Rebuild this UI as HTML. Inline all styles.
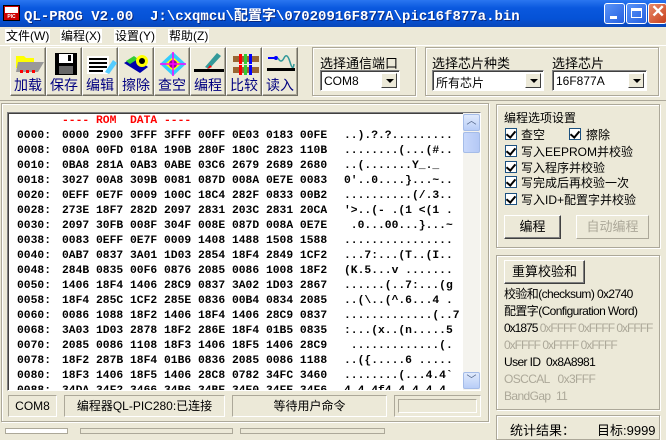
<!DOCTYPE html>
<html><head><meta charset="utf-8"><style>
*{margin:0;padding:0;box-sizing:border-box}
body{width:666px;height:433px;overflow:hidden;background:#ECE9D8;font-family:"Liberation Sans","Noto Sans CJK SC",sans-serif;font-size:12px;position:relative;color:#000}
.a{position:absolute}
.title{left:0;top:0;width:666px;height:27px;background:linear-gradient(#2a76f0,#0a58de 30%,#0552d6 70%,#0a47b8);}
.tt{left:24px;top:5px;color:#fff;font:bold 14px "Liberation Mono","Noto Sans CJK SC",monospace;white-space:pre;text-shadow:1px 1px 0 #0a2a80}
.wb{top:3px;width:21px;height:21px;border:1px solid #fff;border-radius:3px;background:linear-gradient(135deg,#5a94f8,#2560e0)}
.menu{top:29px;font-size:12px;background:#fff;padding:0 1px;line-height:14px}
.btn{top:47px;width:36px;height:49px;border:1px solid;border-color:#fff #716f64 #716f64 #fff;box-shadow:inset -1px -1px 0 #aca899}
.bl{position:absolute;left:0;width:34px;top:27px;text-align:center;color:#000080;font-size:14px}
.grp{border:1px solid #aca899;box-shadow:1px 1px 0 #fff inset,1px 1px 0 #fff}
.combo{background:#fff;border:1px solid;border-color:#808080 #fff #fff #808080;box-shadow:inset 1px 1px 0 #404040;height:21px;font-size:12px;padding:3px 0 0 3px}
.dd{position:absolute;right:2px;top:2px;width:16px;height:15px;background:#ECE9D8;border:1px solid;border-color:#fff #404040 #404040 #fff}
.dd:after{content:"";position:absolute;left:4px;top:5px;border:4px solid transparent;border-top:4px solid #000;border-bottom:0}
.mono{font:bold 11.33px/15px "Liberation Mono",monospace;white-space:pre}
.sb{top:395px;height:22px;border:1px solid;border-color:#aca899 #fff #fff #aca899;text-align:center;line-height:20px;font-size:12px}
.cb{width:12px;height:12px;border:1px solid #1c5180;background:#fff;display:inline-block;position:absolute}
.cb:after{content:"";position:absolute;left:2px;top:0px;width:4px;height:7px;border:solid #000;border-width:0 2px 2px 0;transform:rotate(40deg)}
.pb{border:1px solid;border-color:#fff #404040 #404040 #fff;box-shadow:inset -1px -1px 0 #808080;text-align:center;font-size:13px;line-height:21px}
.g{color:#aca899}
</style></head><body>
<div class="a title"></div>
<div class="a" style="left:3px;top:5px;width:17px;height:16px;background:#c00;border:1px solid #000"><div style="background:#fff;height:6px;margin:1px"></div><div style="font:bold 5px sans-serif;color:#fff;text-align:center">PIC</div></div>
<div class="a tt">QL-PROG V2.00  J:\cxqmcu\配置字\07020916F877A\pic16f877a.bin</div>
<div class="a wb" style="left:604px"><div style="position:absolute;left:5px;top:12px;width:7px;height:3px;background:#fff"></div></div>
<div class="a wb" style="left:626px"><div style="position:absolute;left:4px;top:4px;width:11px;height:10px;border:1px solid #fff;border-top-width:3px"></div></div>
<div class="a wb" style="left:648px;width:19px;background:linear-gradient(135deg,#e88a6a,#c8401c)"><div style="position:absolute;left:2px;top:-2px;color:#fff;font:bold 17px sans-serif">✕</div></div>

<div class="a menu" style="left:5px">文件(W)</div>
<div class="a menu" style="left:60px">编程(X)</div>
<div class="a menu" style="left:114px">设置(Y)</div>
<div class="a menu" style="left:168px">帮助(Z)</div>
<div class="a" style="left:0;top:45px;width:666px;height:1px;background:#fff"></div>

<div class="a btn" style="left:10px"><svg class="a" style="left:3px;top:6px" width="30" height="20"><path d="M2 2h8l2 2h8v10H2z" fill="#ff0"/><path d="M4 8h26l-6 10H2z" fill="#999"/><rect x="6" y="16" width="3" height="3" fill="#f00"/><rect x="12" y="16" width="3" height="3" fill="#f00"/><rect x="18" y="16" width="3" height="3" fill="#f00"/></svg><div class="bl">加载</div></div>
<div class="a btn" style="left:46px"><svg class="a" style="left:7px;top:4px" width="24" height="24"><rect x="1" y="1" width="22" height="22" fill="#000"/><rect x="5" y="2" width="14" height="9" fill="#fff"/><rect x="5" y="14" width="14" height="8" fill="#666"/><rect x="14" y="3" width="3" height="6" fill="#000"/></svg><div class="bl">保存</div></div>
<div class="a btn" style="left:82px"><svg class="a" style="left:4px;top:6px" width="30" height="22"><rect x="0" y="2" width="22" height="18" fill="#fff"/><g fill="#000"><rect x="2" y="4" width="18" height="2"/><rect x="2" y="8" width="18" height="2"/><rect x="2" y="12" width="18" height="2"/><rect x="2" y="16" width="14" height="2"/></g><path d="M18 18l8-12 4 3-8 11z" fill="#5cf"/></svg><div class="bl">编辑</div></div>
<div class="a btn" style="left:118px"><svg class="a" style="left:3px;top:3px" width="30" height="24"><path d="M2 12l10-6 14 10-8 6z" fill="#00a"/><path d="M4 10l8-5 4 3-8 5z" fill="#3c3"/><circle cx="20" cy="10" r="6" fill="#ff0"/><circle cx="20" cy="10" r="3" fill="#000"/></svg><div class="bl">擦除</div></div>
<div class="a btn" style="left:154px"><svg class="a" style="left:3px;top:3px" width="30" height="26"><path d="M15 1l13 12-13 12L2 13z" fill="#3cf"/><path d="M15 6l8 7-8 7-8-7z" fill="#ff0"/><circle cx="15" cy="13" r="4" fill="#909"/><path d="M2 13h26M15 1v24" stroke="#f0f" stroke-width="1.5"/></svg><div class="bl">查空</div></div>
<div class="a btn" style="left:190px"><svg class="a" style="left:2px;top:3px" width="32" height="24"><path d="M12 16l12-14 4 3-12 13z" fill="#399"/><path d="M14 18l3-4 2 2z" fill="#f00"/><rect x="1" y="18" width="30" height="3" fill="#000"/></svg><div class="bl">编程</div></div>
<div class="a btn" style="left:226px"><svg class="a" style="left:6px;top:6px" width="26" height="22"><g><rect x="0" y="2" width="26" height="6" fill="#963"/><rect x="6" y="0" width="3" height="10" fill="#f00"/><rect x="11" y="0" width="3" height="10" fill="#3c3"/><rect x="16" y="0" width="3" height="10" fill="#00f"/></g><g transform="translate(0,11)"><rect x="0" y="2" width="26" height="6" fill="#963"/><rect x="6" y="0" width="3" height="10" fill="#f00"/><rect x="11" y="0" width="3" height="10" fill="#3c3"/><rect x="16" y="0" width="3" height="10" fill="#00f"/></g></svg><div class="bl">比较</div></div>
<div class="a btn" style="left:262px"><svg class="a" style="left:3px;top:4px" width="30" height="24"><path d="M2 6h8" stroke="#00f" stroke-width="2"/><circle cx="10" cy="6" r="2" fill="#00f"/><path d="M12 6q3 6 6 0t6 4 4 2" stroke="#399" fill="none" stroke-width="1.5"/><rect x="1" y="16" width="28" height="3" fill="#000"/></svg><div class="bl">读入</div></div>

<div class="a grp" style="left:312px;top:47px;width:104px;height:49px"></div>
<div class="a" style="left:320px;top:53px;font-size:13px">选择通信端口</div>
<div class="a combo" style="left:320px;top:70px;width:80px">COM8<div class="dd"></div></div>
<div class="a grp" style="left:425px;top:47px;width:234px;height:49px"></div>
<div class="a" style="left:432px;top:53px;font-size:13px">选择芯片种类</div>
<div class="a" style="left:552px;top:53px;font-size:13px">选择芯片</div>
<div class="a combo" style="left:432px;top:70px;width:112px">所有芯片<div class="dd"></div></div>
<div class="a combo" style="left:552px;top:70px;width:95px">16F877A<div class="dd"></div></div>
<div class="a" style="left:0;top:100px;width:666px;height:1px;background:#aca899"></div>

<div class="a grp" style="left:1px;top:103px;width:488px;height:319px"></div>
<div class="a" style="left:7px;top:112px;width:474px;height:279px;background:#fff;border:1px solid;border-color:#808080 #fff #fff #808080;box-shadow:inset 1px 1px 0 #404040;overflow:hidden">
<div class="a mono" style="left:54px;top:1px;color:#f00">---- ROM  DATA ----</div>
<div class="a mono" style="left:9px;top:16px">0000:
0008:
0010:
0018:
0020:
0028:
0030:
0038:
0040:
0048:
0050:
0058:
0060:
0068:
0070:
0078:
0080:
0088:</div>
<div class="a mono" style="left:54px;top:16px">0000 2900 3FFF 3FFF 00FF 0E03 0183 00FE
080A 00FD 018A 190B 280F 180C 2823 110B
0BA8 281A 0AB3 0ABE 03C6 2679 2689 2680
3027 00A8 309B 0081 087D 008A 0E7E 0083
0EFF 0E7F 0009 100C 18C4 282F 0833 00B2
273E 18F7 282D 2097 2831 203C 2831 20CA
2097 30FB 008F 304F 008E 087D 008A 0E7E
0083 0EFF 0E7F 0009 1408 1488 1508 1588
0AB7 0837 3A01 1D03 2854 18F4 2849 1CF2
284B 0835 00F6 0876 2085 0086 1008 18F2
1406 18F4 1406 28C9 0837 3A02 1D03 2867
18F4 285C 1CF2 285E 0836 00B4 0834 2085
0086 1088 18F2 1406 18F4 1406 28C9 0837
3A03 1D03 2878 18F2 286E 18F4 01B5 0835
2085 0086 1108 18F3 1406 18F5 1406 28C9
18F2 287B 18F4 01B6 0836 2085 0086 1188
18F3 1406 18F5 1406 28C8 0782 34FC 3460
34DA 34F2 3466 34B6 34BE 34E0 34FE 34F6</div>
<div class="a mono" style="left:336px;top:16px">..).?.?.........
........(...(#..
..(.......Y_._
0'..0....}...~..
..........(/.3..
'>..(- .(1 <(1 .
 .0...00...}...~
................
...7:...(T..(I..
(K.5...v .......
......(..7:...(g
..(\..(^.6...4 .
.............(..7
:...(x..(n.....5
 .............(.
..({.....6 .....
........(...4.4`
4.4.4f4.4.4.4.4.</div>
<div class="a" style="left:455px;top:0;width:17px;height:277px;background:#f4f3ee"></div>
<div class="a" style="left:455px;top:1px;width:17px;height:17px;background:linear-gradient(#e0eafc,#b8cdf7);border:1px solid #a5bce8;border-radius:2px;text-align:center;font-size:10px;color:#4d6185;line-height:14px">︿</div>
<div class="a" style="left:455px;top:19px;width:17px;height:21px;background:linear-gradient(90deg,#c8d8fb,#b4c8f5);border:1px solid #a5bce8;border-radius:2px"></div>
<div class="a" style="left:455px;top:259px;width:17px;height:17px;background:linear-gradient(#e0eafc,#b8cdf7);border:1px solid #a5bce8;border-radius:2px;text-align:center;font-size:10px;color:#4d6185;line-height:16px">﹀</div>
</div>
<div class="a sb" style="left:8px;width:49px">COM8</div>
<div class="a sb" style="left:64px;width:161px">编程器QL-PIC280:已连接</div>
<div class="a sb" style="left:232px;width:155px">等待用户命令</div>
<div class="a sb" style="left:394px;width:87px"><div style="margin:3px;height:14px;border:1px solid;border-color:#aca899 #fff #fff #aca899"></div></div>
<div class="a" style="left:5px;top:428px;width:63px;height:6px;border:1px solid #aca899;background:#fff"></div>
<div class="a" style="left:80px;top:428px;width:153px;height:6px;border:1px solid #aca899"></div>
<div class="a" style="left:240px;top:428px;width:145px;height:6px;border:1px solid #aca899"></div>

<div class="a grp" style="left:496px;top:104px;width:164px;height:144px"></div>
<div class="a" style="left:504px;top:109px;font-size:12px">编程选项设置</div>
<div class="cb a" style="left:505px;top:128px"></div><div class="a" style="left:521px;top:126px">查空</div>
<div class="cb a" style="left:569px;top:128px"></div><div class="a" style="left:586px;top:126px">擦除</div>
<div class="cb a" style="left:505px;top:145px"></div><div class="a" style="left:521px;top:143px">写入EEPROM并校验</div>
<div class="cb a" style="left:505px;top:161px"></div><div class="a" style="left:521px;top:159px">写入程序并校验</div>
<div class="cb a" style="left:505px;top:176px"></div><div class="a" style="left:521px;top:174px">写完成后再校验一次</div>
<div class="cb a" style="left:505px;top:193px"></div><div class="a" style="left:521px;top:191px">写入ID+配置字并校验</div>
<div class="a pb" style="left:504px;top:215px;width:57px;height:24px">编程</div>
<div class="a pb g" style="left:576px;top:215px;width:73px;height:24px;border-color:#fff #aca899 #aca899 #fff;box-shadow:none">自动编程</div>

<div class="a grp" style="left:496px;top:255px;width:164px;height:155px"></div>
<div class="a pb" style="left:504px;top:260px;width:81px;height:24px">重算校验和</div>
<div class="a" style="left:504px;top:286px;line-height:17px;font-size:12px;letter-spacing:-0.6px;white-space:nowrap">校验和(checksum) 0x2740<br>配置字(Configuration Word)<br><span style="letter-spacing:-1px">0x1875 <span class="g">0xFFFF 0xFFFF 0xFFFF</span></span><br><span class="g" style="letter-spacing:-1px">0xFFFF 0xFFFF 0xFFFF</span><br>User ID &nbsp;0x8A8981<br><span class="g">OSCCAL &nbsp;&nbsp;0x3FFF</span><br><span class="g">BandGap &nbsp;11</span></div>
<div class="a grp" style="left:496px;top:415px;width:164px;height:25px"></div>
<div class="a" style="left:510px;top:420px;font-size:13px">统计结果：</div>
<div class="a" style="left:597px;top:420px;font-size:13px">目标:9999</div>
</body></html>
